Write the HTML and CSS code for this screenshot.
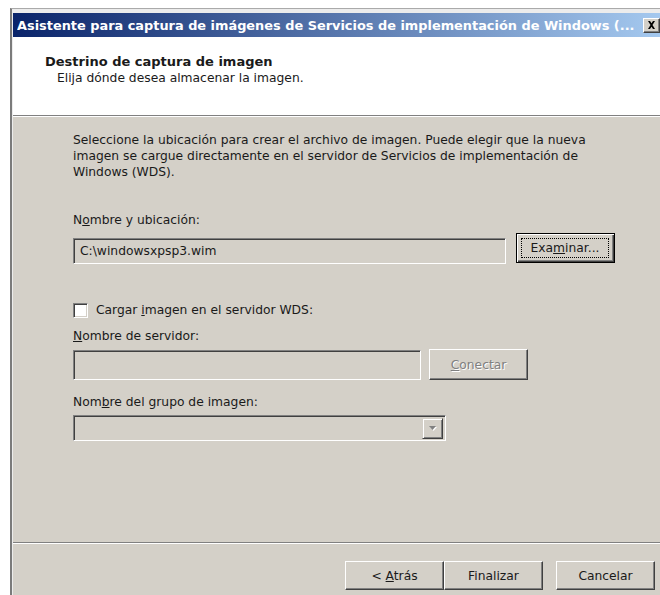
FILE: index.html
```html
<!DOCTYPE html>
<html lang="es">
<head>
<meta charset="utf-8">
<title>Asistente para captura de imágenes</title>
<link rel="stylesheet" href="styles.css">
</head>
<body>
<div class="window">
  <div class="titlebar">
    <span class="title">Asistente para captura de imágenes de Servicios de implementación de Windows (...</span>
    <span class="close" aria-label="Cerrar">
      <svg width="9" height="8" viewBox="0 0 9 8"><path d="M1 0h2l1.5 2.2L6 0h2L5.5 4 8 8H6L4.5 5.8 3 8H1l2.5-4z" fill="#000"/></svg>
    </span>
  </div>

  <div class="header">
    <div class="h-title">Destrino de captura de imagen</div>
    <div class="h-sub">Elija dónde desea almacenar la imagen.</div>
  </div>

  <div class="content">
    <div class="main">
      <p class="intro">Seleccione la ubicación para crear el archivo de imagen. Puede elegir que la nueva<br>imagen se cargue directamente en el servidor de Servicios de implementación de<br>Windows (WDS).</p>

      <div class="label l-path">N<u>o</u>mbre y ubicación:</div>
      <div class="row r-path">
        <div class="field f-path">C:\windowsxpsp3.wim</div>
        <button class="btn default b-browse"><span class="focus">Exa<u>m</u>inar...</span></button>
      </div>

      <label class="check">
        <span class="box"></span>
        <span>Cargar <u>i</u>magen en el servidor WDS:</span>
      </label>

      <div class="label l-server"><u>N</u>ombre de servidor:</div>
      <div class="row r-server">
        <div class="field f-server"></div>
        <button class="btn disabled b-connect"><u>C</u>onectar</button>
      </div>

      <div class="label l-group">Nom<u>b</u>re del grupo de imagen:</div>
      <div class="field combo">
        <span class="drop">
          <svg width="7" height="4" viewBox="0 0 7 4"><path d="M0 0h7L3.5 4z" fill="#808080"/></svg>
        </span>
      </div>
    </div>

    <div class="footer">
      <button class="btn b-nav"><span>&lt; <u>A</u>trás</span></button>
      <button class="btn b-nav">Finalizar</button>
      <button class="btn b-nav b-cancel">Cancelar</button>
    </div>
  </div>
</div>
</body>
</html>
```

FILE: styles.css
```css
* {
  box-sizing: border-box;
}

html,
body {
  margin: 0;
  padding: 0;
  overflow: hidden;
  background: #fff;
}

body {
  width: 660px;
  height: 595px;
  font-family: "DejaVu Sans", Tahoma, sans-serif;
  font-size: 12.3px;
  color: #1a1a1a;
}

u {
  text-decoration: underline;
  text-underline-offset: 1px;
}

/* window frame */
.window {
  margin: 8px 0 0 10px;
  width: 656px;
  height: 587px;
  border-top: 1px solid #aaa;
  border-left: 2px solid #7b7b7b;
  padding: 4px 0 0 1px;
  background: #ececec;
  display: flex;
  flex-direction: column;
}

.titlebar {
  height: 24px;
  flex: none;
  background: linear-gradient(to right, #0a246a, #a6caf0);
  display: flex;
  align-items: center;
  padding: 0 6px 0 4px;
  color: #fff;
  font-weight: bold;
  font-size: 12.9px;
  white-space: nowrap;
}

.title {
  flex: 1;
  overflow: hidden;
}

.close {
  flex: none;
  width: 17px;
  height: 15px;
  background: #d4d0c8;
  border: 1px solid;
  border-color: #fff #404040 #404040 #fff;
  box-shadow: inset -1px -1px #808080;
  display: flex;
  align-items: center;
  justify-content: center;
}

/* white page header */
.header {
  height: 79px;
  flex: none;
  background: #fff;
  border-bottom: 1px solid #808080;
  padding: 17px 0 0 32px;
  line-height: 16px;
}

.h-title {
  font-weight: bold;
  font-size: 13px;
}

.h-sub {
  padding-left: 12px;
}

/* gray page body */
.content {
  flex: 1;
  background: #d4d0c8;
  border-top: 1px solid #fff;
  display: flex;
  flex-direction: column;
}

.main {
  flex: 1;
  padding: 15px 0 0 60px;
}

.intro {
  margin: 0;
  line-height: 16px;
}

.label {
  line-height: 16px;
}

.l-path {
  margin-top: 32px;
}

.l-server {
  margin-top: 10px;
}

.l-group {
  margin-top: 14px;
}

.row {
  display: flex;
  align-items: flex-start;
}

.r-path {
  margin-top: 5px;
}

.r-server {
  margin-top: 5px;
}

/* sunken edit boxes */
.field {
  background: #d4d0c8;
  border: 1px solid;
  border-color: #808080 #fff #fff #808080;
  box-shadow: inset 1px 1px #404040, inset -1px -1px #d4d0c8;
  padding: 0 6px;
  display: flex;
  align-items: center;
}

.f-path {
  width: 433px;
  height: 26px;
  margin-top: 5px;
}

.f-server {
  width: 348px;
  height: 30px;
  margin-top: 1px;
}

.combo {
  width: 373px;
  height: 26px;
  margin-top: 5px;
  justify-content: flex-end;
  padding: 2px 2px 2px 0;
}

.drop {
  width: 21px;
  height: 21px;
  background: #d4d0c8;
  border: 1px solid;
  border-color: #d4d0c8 #404040 #404040 #d4d0c8;
  box-shadow: inset 1px 1px #fff, inset -1px -1px #808080;
  display: flex;
  align-items: center;
  justify-content: center;
}

.drop svg {
  filter: drop-shadow(1px 1px 0 #fff);
}

/* raised push buttons */
.btn {
  height: 29px;
  width: 98px;
  padding: 0;
  background: #d4d0c8;
  border: 1px solid;
  border-color: #fff #404040 #404040 #fff;
  box-shadow: inset -1px -1px #808080;
  font: inherit;
  color: #1a1a1a;
  display: flex;
  align-items: center;
  justify-content: center;
}

.btn.default {
  border: 1px solid #000;
  box-shadow: inset 1px 1px #fff, inset -1px -1px #404040, inset -2px -2px #808080;
  padding: 4px 5px 4px 4px;
  align-items: stretch;
}

.focus {
  flex: 1;
  border: 1px dotted #000;
  display: flex;
  align-items: center;
  justify-content: center;
}

.b-browse {
  width: 99px;
  height: 30px;
  margin-left: 10px;
}

.b-connect {
  width: 99px;
  height: 31px;
  margin-left: 8px;
}

.btn.disabled {
  color: #808080;
  text-shadow: 1px 1px 0 #fff;
}

/* checkbox */
.check {
  display: flex;
  align-items: center;
  height: 16px;
  margin-top: 38px;
  line-height: 16px;
}

.box {
  width: 15px;
  height: 15px;
  margin-right: 8px;
  background: #fff;
  border: 1px solid;
  border-color: #808080 #fff #fff #808080;
  box-shadow: inset 1px 1px #404040, inset -1px -1px #d4d0c8;
}

/* wizard navigation */
.footer {
  flex: none;
  height: 53px;
  border-top: 1px solid #808080;
  box-shadow: inset 0 1px #fff;
  padding: 18px 11px 0 0;
  display: flex;
  justify-content: flex-end;
  align-items: flex-start;
}

.b-nav {
  width: 99px;
}

.b-cancel {
  margin-left: 13px;
}
```
